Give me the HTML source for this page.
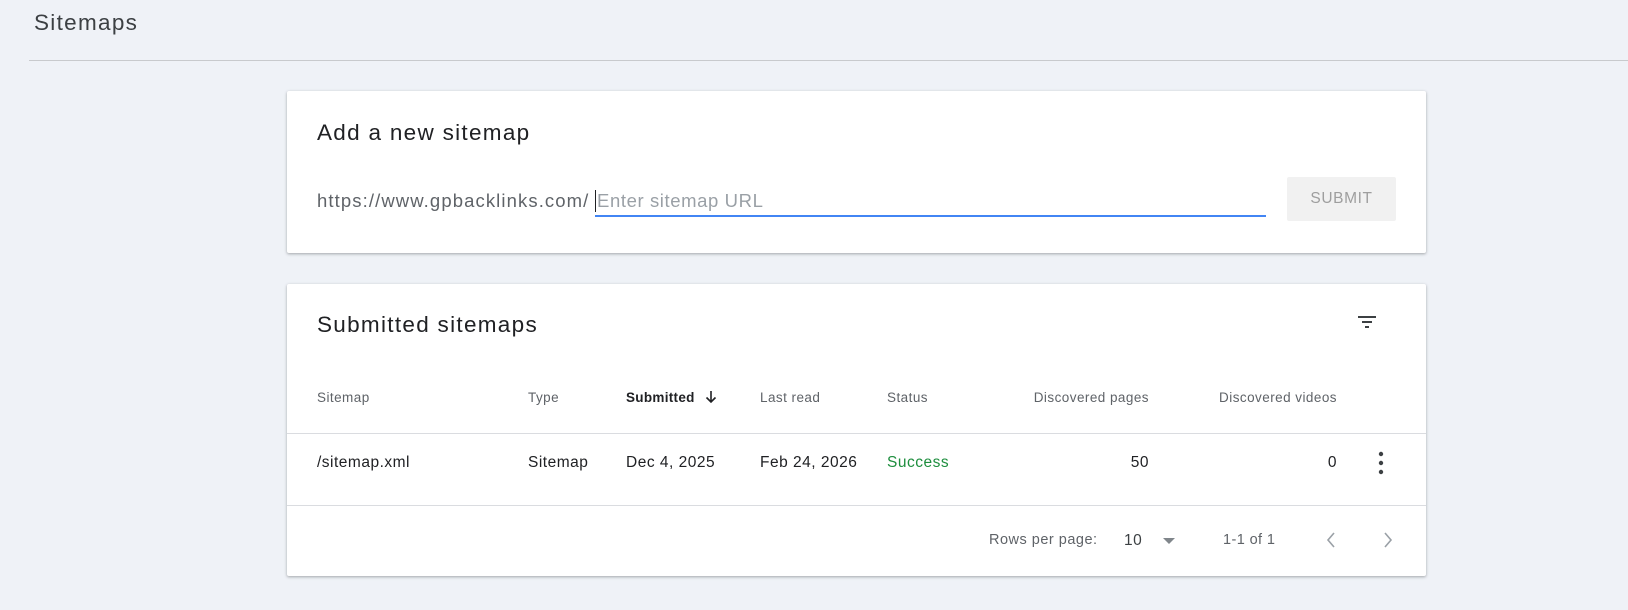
<!DOCTYPE html>
<html><head><style>
*{margin:0;padding:0;box-sizing:border-box}
body{width:1628px;height:610px;background:#eff2f7;font-family:"Liberation Sans",Arial,sans-serif;position:relative;overflow:hidden;color:#202124}
.a{position:absolute;white-space:nowrap}
.card{position:absolute;background:#fff;border-radius:2px;box-shadow:0 1px 3px rgba(60,64,67,.3),0 1px 2px rgba(60,64,67,.15)}
.h{font-size:13.5px;color:#5f6368;top:390px;letter-spacing:0.45px}
.d{font-size:15.5px;color:#202124;top:454px;letter-spacing:0.5px}
</style></head><body>
<div class="a" style="left:34px;top:10px;font-size:22.5px;color:#3c4043;letter-spacing:1.3px">Sitemaps</div>
<div class="a" style="left:29px;top:60px;right:0;height:1px;background:#c8cacd"></div>

<div class="card" style="left:287px;top:91px;width:1139px;height:162px"></div>
<div class="a" style="left:317px;top:120px;font-size:22.5px;letter-spacing:1.3px">Add a new sitemap</div>
<div class="a" style="left:317px;top:190px;font-size:18.5px;color:#5f6368;letter-spacing:1.1px">https://www.gpbacklinks.com/</div>
<div class="a" style="left:595px;top:190px;width:1px;height:22px;background:#202124"></div>
<div class="a" style="left:597px;top:190px;font-size:18.5px;color:#9aa0a6;letter-spacing:0.6px">Enter sitemap URL</div>
<div class="a" style="left:595px;top:215px;width:671px;height:2px;background:#4285f4"></div>
<div class="a" style="left:1287px;top:177px;width:109px;height:44px;background:#f1f1f1;border-radius:2px;color:#9e9e9e;font-size:15.5px;text-align:center;line-height:44px;letter-spacing:0.6px">SUBMIT</div>

<div class="card" style="left:287px;top:284px;width:1139px;height:292px"></div>
<div class="a" style="left:317px;top:312px;font-size:22.5px;letter-spacing:1.3px">Submitted sitemaps</div>
<svg class="a" style="left:1355px;top:310px" width="24" height="24" viewBox="0 0 24 24"><path d="M3 6h18v2H3zM7 11h10v2H7zM10 16h4v2h-4z" fill="#3c4043"/></svg>

<div class="a h" style="left:317px">Sitemap</div>
<div class="a h" style="left:528px">Type</div>
<div class="a h" style="left:626px;color:#202124;font-weight:bold;letter-spacing:0.3px">Submitted</div>
<svg class="a" style="left:703px;top:389px" width="16" height="16" viewBox="0 0 16 16"><path d="M8 2v11M3.5 8.5L8 13l4.5-4.5" stroke="#202124" stroke-width="1.6" fill="none"/></svg>
<div class="a h" style="left:760px">Last read</div>
<div class="a h" style="left:887px">Status</div>
<div class="a h" style="right:479px">Discovered pages</div>
<div class="a h" style="right:291px">Discovered videos</div>
<div class="a" style="left:287px;top:433px;width:1139px;height:1px;background:#dadce0"></div>

<div class="a d" style="left:317px">/sitemap.xml</div>
<div class="a d" style="left:528px">Sitemap</div>
<div class="a d" style="left:626px">Dec 4, 2025</div>
<div class="a d" style="left:760px">Feb 24, 2026</div>
<div class="a d" style="left:887px;color:#1e8e3e">Success</div>
<div class="a d" style="right:479px">50</div>
<div class="a d" style="right:291px">0</div>
<svg class="a" style="left:1375px;top:451px" width="12" height="24" viewBox="0 0 12 24"><circle cx="6" cy="3" r="2.2" fill="#3c4043"/><circle cx="6" cy="12" r="2.2" fill="#3c4043"/><circle cx="6" cy="21" r="2.2" fill="#3c4043"/></svg>
<div class="a" style="left:287px;top:505px;width:1139px;height:1px;background:#dadce0"></div>

<div class="a" style="left:989px;top:532px;font-size:14.5px;color:#5f6368;letter-spacing:0.5px">Rows per page:</div>
<div class="a" style="left:1124px;top:532px;font-size:15.5px;color:#3c4043;letter-spacing:0.5px">10</div>
<svg class="a" style="left:1162px;top:536px" width="14" height="10" viewBox="0 0 14 10"><path d="M1 2h12L7 8z" fill="#80868b"/></svg>
<div class="a" style="left:1223px;top:532px;font-size:14.5px;color:#5f6368;letter-spacing:0.4px">1-1 of 1</div>
<svg class="a" style="left:1324px;top:530px" width="14" height="20" viewBox="0 0 14 20"><path d="M10 3L4 10l6 7" stroke="#9aa0a6" stroke-width="1.6" fill="none"/></svg>
<svg class="a" style="left:1381px;top:530px" width="14" height="20" viewBox="0 0 14 20"><path d="M4 3l6 7-6 7" stroke="#9aa0a6" stroke-width="1.6" fill="none"/></svg>
</body></html>
